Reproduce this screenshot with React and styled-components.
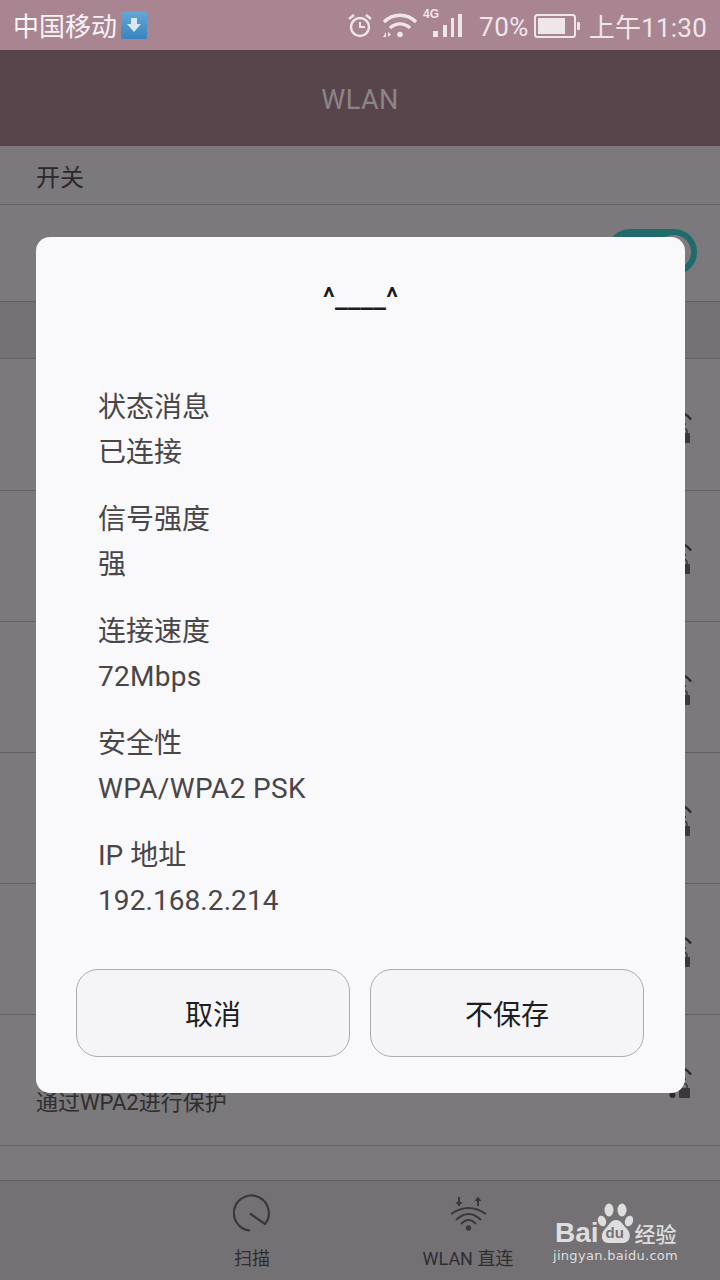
import React from "react";
import styled, { createGlobalStyle } from "styled-components";

const cjk = `Roboto, "Noto Sans CJK SC", sans-serif`;

const GlobalStyle = createGlobalStyle`
  html, body {
    margin: 0;
    padding: 0;
    background: #7b797c;
  }
  * {
    box-sizing: border-box;
  }
`;

const Screen = styled.div`
  position: relative;
  width: 720px;
  height: 1280px;
  overflow: hidden;
  display: flex;
  flex-direction: column;
  background: #7b797c;
  font-family: ${cjk};
`;

const StatusBar = styled.div`
  height: 50px;
  flex: none;
  display: flex;
  align-items: center;
  justify-content: space-between;
  padding: 0 13px;
  background: #a98592;
  color: #f0e6ea;
  font-size: 26px;
`;

const StatusGroup = styled.div`
  display: flex;
  align-items: center;
`;

const Carrier = styled.span`
  color: #f8f3f5;
  margin-bottom: 2px;
`;

const DownloadBadge = styled.div`
  width: 26px;
  height: 27px;
  margin-left: 4px;
  border-radius: 2px;
  background: linear-gradient(#62a7d6, #3a83bd);
  display: flex;
  align-items: center;
  justify-content: center;
`;

const Percent = styled.span`
  margin-left: 16px;
  padding-top: 3px;
  letter-spacing: 0.5px;
`;

const Clock = styled.span`
  margin-left: 9px;
  letter-spacing: 0.2px;
`;

const Header = styled.div`
  height: 96px;
  flex: none;
  display: flex;
  align-items: center;
  justify-content: center;
  padding-top: 3px;
  background: #58454b;
  color: #8b8589;
  font-size: 27px;
  letter-spacing: 0.5px;
`;

const SectionLabel = styled.div`
  height: ${({ $h }) => $h}px;
  flex: none;
  padding-left: 36px;
  display: flex;
  align-items: center;
  font-size: 24px;
  color: #2b292b;
  background: ${({ $band }) => ($band ? "#737174" : "#7b797c")};
  border-bottom: 1px solid #636164;
`;

const ToggleRow = styled.div`
  height: 97px;
  flex: none;
  display: flex;
  align-items: flex-start;
  justify-content: flex-end;
  padding: 24px 23px 0 0;
  border-bottom: 1px solid #636164;
`;

const Toggle = styled.div`
  width: 90px;
  height: 46px;
  border-radius: 23px;
  border: 6px solid #1f6a6b;
  background: #1f6a6b;
  display: flex;
  justify-content: flex-end;
`;

const ToggleKnob = styled.div`
  width: 34px;
  height: 34px;
  border-radius: 50%;
  background: #7d7b7e;
`;

const NetworkList = styled.div`
  padding-top: 1px;
  display: flex;
  flex-direction: column;
`;

const NetworkRow = styled.div`
  height: 131px;
  flex: none;
  padding: 0 28px 29px 36px;
  display: flex;
  align-items: flex-end;
  justify-content: space-between;
  border-bottom: 1px solid #636164;
  font-size: 22px;
  color: #302e30;
`;

const RowIcon = styled.svg`
  width: 26px;
  height: 34px;
  margin-bottom: 17px;
  flex: none;
`;

const Spacer = styled.div`
  flex: 1;
`;

const BottomBar = styled.div`
  height: 100px;
  flex: none;
  border-top: 1px solid #5f5d60;
  background: #737174;
  display: flex;
  justify-content: center;
  gap: 112px;
`;

const BarItem = styled.div`
  width: 104px;
  display: flex;
  flex-direction: column;
  align-items: center;
  padding-top: 13px;
  font-size: 18px;
  color: #2f2d30;
  white-space: nowrap;
`;

const BarIcon = styled.svg`
  width: 38px;
  height: 38px;
  margin-bottom: 12px;
`;

const Overlay = styled.div`
  position: absolute;
  left: 36px;
  top: 237px;
  width: 649px;
  height: 856px;
  border-radius: 14px;
  background: #f9f8fb;
  display: flex;
  flex-direction: column;
  padding: 0 40px 36px;
`;

const DialogTitle = styled.div`
  margin-top: 47px;
  text-align: center;
  font-size: 28.5px;
  font-weight: 500;
  line-height: 28px;
  color: #1c1b1d;
`;

const InfoList = styled.div`
  margin-top: 76px;
  padding-left: 22px;
  display: flex;
  flex-direction: column;
  gap: 27px;
`;

const InfoBlock = styled.div`
  display: flex;
  flex-direction: column;
  gap: 5px;
  font-size: 28px;
  line-height: 40px;
  color: #484649;
`;

const InfoLine = styled.span`
  height: 40px;
  letter-spacing: ${({ $spacing }) => $spacing || 0}px;
`;

const Actions = styled.div`
  margin-top: auto;
  display: flex;
  gap: 20px;
`;

const ActionButton = styled.button`
  width: 274px;
  height: 88px;
  border: 1px solid #aeacaf;
  border-radius: 22px;
  background: #f5f4f7;
  color: #1f1e20;
  font-family: ${cjk};
  font-size: 28px;
  padding: 0;
`;

const Watermark = styled.div`
  position: absolute;
  left: 555px;
  top: 1203px;
  width: 130px;
  color: #dfdedf;
`;

const LogoLine = styled.div`
  display: flex;
  align-items: flex-end;
  height: 40px;
  font-family: "Liberation Sans", sans-serif;
  font-weight: 700;
  font-size: 28px;
  line-height: 20px;
`;

const PawBox = styled.div`
  position: relative;
  width: 36px;
  height: 40px;
  margin-left: -2px;
  flex: none;
`;

const PawDu = styled.span`
  position: absolute;
  left: 9px;
  bottom: 3px;
  font-size: 15px;
  line-height: 15px;
  color: #747275;
`;

const LogoCn = styled.span`
  margin-left: 2px;
  font-family: "Noto Sans CJK SC", sans-serif;
  font-weight: 500;
  font-size: 21px;
  line-height: 20px;
  white-space: nowrap;
`;

const Domain = styled.div`
  font-family: "DejaVu Sans", sans-serif;
  font-size: 13px;
  line-height: 16px;
  margin: 5px 0 0 -2px;
  letter-spacing: 0.3px;
  white-space: nowrap;
`;

const info = [
  { label: "状态消息", value: "已连接" },
  { label: "信号强度", value: "强" },
  { label: "连接速度", value: "72Mbps", spacing: 0.3 },
  { label: "安全性", value: "WPA/WPA2 PSK", spacing: 0.33 },
  { label: "IP 地址", value: "192.168.2.214", spacing: 0.08 },
];

const AlarmIcon = () => (
  <svg width="26" height="26" viewBox="0 0 26 26" fill="none" stroke="#f0e6ea" strokeWidth="2.4">
    <circle cx="13" cy="15" r="9" />
    <path d="M13 10v5h5" strokeWidth="2" />
    <path d="M2 7l5-4M24 7l-5-4" />
  </svg>
);

const WifiIcon = () => (
  <svg width="36" height="26" viewBox="0 0 36 26" fill="none" stroke="#f0e6ea" strokeWidth="3.4" style={{ marginLeft: 9 }}>
    <path d="M2 10C11 1 25 1 34 10" />
    <path d="M8 16c6-5.500 14-5.500 20 0" />
    <circle cx="18" cy="22.500" r="2.800" fill="#f0e6ea" stroke="none" />
    <path d="M1 25l3-5v5zM6 20l3 2.500-3 2.500z" fill="#f0e6ea" stroke="none" />
  </svg>
);

const SignalIcon = () => (
  <svg width="40" height="36" viewBox="0 -2 40 36" style={{ marginLeft: 5 }}>
    <text x="0" y="9" fontFamily="Liberation Sans, sans-serif" fontWeight="700" fontSize="12" fill="#f0e6ea">4G</text>
    <g fill="#f0e6ea">
      <rect x="10" y="22" width="5" height="6" />
      <rect x="20" y="16" width="4" height="12" />
      <rect x="28" y="9" width="3" height="19" />
      <rect x="35" y="5" width="4" height="23" />
    </g>
  </svg>
);

const BatteryIcon = () => (
  <svg width="46" height="24" viewBox="0 0 46 24" style={{ marginLeft: 5, marginTop: 2 }}>
    <rect x="1" y="1" width="40" height="22" rx="2.500" fill="none" stroke="#f0e6ea" strokeWidth="2" />
    <rect x="4" y="4" width="27" height="16" fill="#eee6e9" />
    <rect x="43" y="8" width="3" height="8" rx="1" fill="#f0e6ea" />
  </svg>
);

const LockWifi = () => (
  <RowIcon viewBox="0 0 26 34" fill="none">
    <path d="M18 3.500c3 1.500 5 3.500 7 6" stroke="#2c2a2c" strokeWidth="2.500" />
    <circle cx="19" cy="14" r="1" fill="#2c2a2c" />
    <circle cx="6.500" cy="30" r="3" fill="#2c2a2c" />
    <rect x="13" y="23" width="11" height="10" rx="1" fill="#3a383a" />
    <path d="M16 23v-2a2.500 2.500 0 0 1 5 0v2" stroke="#3a383a" strokeWidth="1.500" />
  </RowIcon>
);

const ScanIcon = () => (
  <BarIcon viewBox="0 0 38 38" fill="none" stroke="#3a383b" strokeWidth="2.200">
    <path d="M17 36.500A17.500 17.500 0 1 1 32 30L17 19.500" />
  </BarIcon>
);

const DirectIcon = () => (
  <BarIcon viewBox="0 0 38 38" fill="none" stroke="#3a383b" strokeWidth="2">
    <path d="M10 3v5M29 12V7" />
    <path d="M6.500 8h7L10 12.500zM25.500 7h7L29 2.500z" fill="#3a383b" stroke="none" />
    <path d="M2 20Q19.500 8 37 20" />
    <path d="M7 26Q19.500 14 32 26" />
    <path d="M12 30Q19.500 22 27 30" />
    <circle cx="19.500" cy="34" r="2.700" fill="#3a383b" stroke="none" />
  </BarIcon>
);

const App = () => (
  <Screen>
    <GlobalStyle />
    <StatusBar>
      <StatusGroup>
        <Carrier>中国移动</Carrier>
        <DownloadBadge>
          <svg width="14" height="16" viewBox="0 0 14 16">
            <path d="M4 1h6v6h4l-7 8-7-8h4z" fill="#d7e8f2" />
          </svg>
        </DownloadBadge>
      </StatusGroup>
      <StatusGroup>
        <AlarmIcon />
        <WifiIcon />
        <SignalIcon />
        <Percent>70%</Percent>
        <BatteryIcon />
        <Clock>上午11:30</Clock>
      </StatusGroup>
    </StatusBar>
    <Header>WLAN</Header>
    <SectionLabel $h={59}>开关</SectionLabel>
    <ToggleRow>
      <Toggle>
        <ToggleKnob />
      </Toggle>
    </ToggleRow>
    <SectionLabel $h={57} $band />
    <NetworkList>
      {[0, 1, 2, 3, 4, 5].map((i) => (
        <NetworkRow key={i}>
          <span>通过WPA2进行保护</span>
          <LockWifi />
        </NetworkRow>
      ))}
    </NetworkList>
    <Spacer />
    <BottomBar>
      <BarItem>
        <ScanIcon />
        扫描
      </BarItem>
      <BarItem>
        <DirectIcon />
        WLAN 直连
      </BarItem>
    </BottomBar>

    <Overlay>
      <DialogTitle>^____^</DialogTitle>
      <InfoList>
        {info.map(({ label, value, spacing }) => (
          <InfoBlock key={label}>
            <InfoLine>{label}</InfoLine>
            <InfoLine $spacing={spacing}>{value}</InfoLine>
          </InfoBlock>
        ))}
      </InfoList>
      <Actions>
        <ActionButton>取消</ActionButton>
        <ActionButton>不保存</ActionButton>
      </Actions>
    </Overlay>

    <Watermark>
      <LogoLine>
        Bai
        <PawBox>
          <svg width="36" height="40" viewBox="0 0 36 40" fill="#dfdedf">
            <ellipse cx="5" cy="18" rx="4" ry="5.500" transform="rotate(-20 5 18)" />
            <ellipse cx="12" cy="7" rx="4.500" ry="6.500" />
            <ellipse cx="25" cy="7" rx="4.500" ry="6.500" />
            <ellipse cx="32" cy="18" rx="4" ry="5.500" transform="rotate(20 32 18)" />
            <path d="M19 17c5 0 7 5 11 9 5 5 3 14-4 14H11C4 40 3 31 8 26c4-4 6-9 11-9z" />
          </svg>
          <PawDu>du</PawDu>
        </PawBox>
        <LogoCn>经验</LogoCn>
      </LogoLine>
      <Domain>jingyan.baidu.com</Domain>
    </Watermark>
  </Screen>
);

export default App;
